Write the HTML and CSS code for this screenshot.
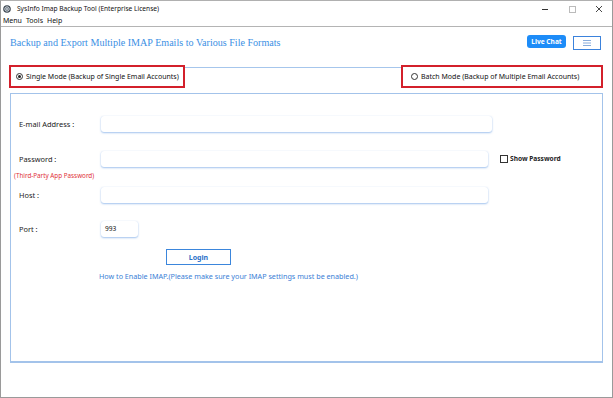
FILE: index.html
```html
<!DOCTYPE html>
<html>
<head>
<meta charset="utf-8">
<link rel="stylesheet" href="styles.css">
</head>
<body>
<div class="window">
  <div class="titlebar">
    <svg class="appicon" width="8" height="8" viewBox="0 0 8 8"><circle cx="4" cy="4" r="3.8" fill="#3c4650"/><circle cx="4" cy="4" r="2.2" fill="none" stroke="#dfe6ee" stroke-width="1"/><circle cx="4" cy="4" r="0.9" fill="#dfe6ee"/></svg>
    <span class="title">SysInfo Imap Backup Tool (Enterprise License)</span>
    <div class="controls">
      <svg width="8" height="8" viewBox="0 0 8 8"><line x1="1" y1="4.5" x2="7" y2="4.5" stroke="#333" stroke-width="1"/></svg>
      <svg width="8" height="8" viewBox="0 0 8 8"><rect x="1.5" y="1.5" width="6" height="6" fill="none" stroke="#bbb" stroke-width="1"/></svg>
      <svg width="8" height="8" viewBox="0 0 8 8"><path d="M1 1L7 7M7 1L1 7" stroke="#333" stroke-width="0.9"/></svg>
    </div>
  </div>
  <div class="menubar">
    <span>Menu</span><span>Tools</span><span>Help</span>
  </div>
  <div class="header">
    <h1 class="heading">Backup and Export Multiple IMAP Emails to Various File Formats</h1>
    <div class="header-actions">
      <button class="livechat">Live Chat</button>
      <button class="hamburger"><svg width="8" height="6" viewBox="0 0 8 6"><path d="M0 0.5H8M0 3H8M0 5.5H8" stroke="#7aa3d8" stroke-width="0.9"/></svg></button>
    </div>
  </div>
  <div class="modes">
    <label class="mode"><span class="radio checked"></span>Single Mode (Backup of Single Email Accounts)</label>
    <div class="mode-line"></div>
    <label class="mode batch"><span class="radio"></span>Batch Mode (Backup of Multiple Email Accounts)</label>
  </div>
  <div class="panel">
    <div class="row r1"><span class="label">E-mail Address :</span><div class="input w-email"></div></div>
    <div class="row r2"><span class="label">Password :</span><div class="input w-pass"></div>
      <label class="show"><span class="check"></span>Show Password</label></div>
    <div class="note">(Third-Party App Password)</div>
    <div class="row r3"><span class="label">Host :</span><div class="input w-host"></div></div>
    <div class="row r4"><span class="label">Port :</span><div class="input w-port">993</div></div>
    <div class="login-row"><button class="login">Login</button></div>
    <div class="link">How to Enable IMAP.(Please make sure your IMAP settings must be enabled.)</div>
  </div>
</div>
</body>
</html>
```
FILE: styles.css
```css
* { box-sizing: border-box; }
html, body { margin: 0; padding: 0; background: #fff; }
body { font-family: "Noto Sans", "Liberation Sans", sans-serif; color: #222; }
.window {
  width: 613px; height: 398px;
  border: 1px solid #9a9a9a;
  border-top-color: #b0b0b0;
  background: #fff;
  display: flex; flex-direction: column;
}
.titlebar {
  height: 14px; display: flex; align-items: center;
  padding-left: 2px; padding-top: 1px;
}
.appicon { margin-right: 6px; }
.title { font-size: 6.6px; color: #111; letter-spacing: 0; }
.controls { margin-left: auto; display: flex; gap: 19px; margin-right: 9px; }
.controls svg { display: block; }
.menubar {
  height: 12px; display: flex; align-items: center; gap: 4px;
  padding-left: 2px; font-size: 7px; color: #111;
  border-bottom: 1px solid #b4b4b4;
}
.header {
  display: flex; align-items: flex-start; justify-content: space-between;
  padding: 8px 11px 0 9px; height: 38px;
}
.heading {
  margin: 2px 0 0 0; font-family: "Liberation Serif", serif; font-weight: normal;
  font-size: 10.1px; color: #3b8fe4;
}
.header-actions { display: flex; gap: 7px; align-items: flex-start; }
.livechat {
  width: 39px; height: 13px; border: none; border-radius: 3px;
  background: #1d8cf8; color: #fff; font-family: "Noto Sans", sans-serif;
  font-weight: bold; font-size: 6.6px; padding: 0; margin-top: 0;
}
.hamburger {
  width: 28px; height: 14px; margin-top: 1px; background: #fff;
  border: 1.5px solid #3b82dc; padding: 0;
  display: flex; align-items: center; justify-content: center;
}
.modes {
  display: flex; align-items: flex-start; height: 23px;
  margin: 0 9px 0 9px;
}
.mode {
  height: 23px; border: 2px solid #d3202b;
  display: flex; align-items: center; font-size: 7px; color: #111;
  padding-left: 5px; white-space: nowrap;
}
.mode:first-child { width: 176px; margin-left: -1px; }
.mode.batch { width: 202px; padding-left: 8px; }
.mode-line { flex: 1; border-top: 1px solid #a6c6ec; margin-top: 2px; }
.radio {
  width: 7px; height: 7px; border-radius: 50%; border: 0.8px solid #333;
  margin-right: 3px; display: inline-flex; align-items: center; justify-content: center;
  background: #fff;
}
.radio.checked::after {
  content: ""; width: 3.5px; height: 3.5px; border-radius: 50%; background: #222;
}
.panel {
  margin: 5px 9px 0 9px; height: 270px;
  border: 1px solid #a3c3ea; border-bottom: 2px solid #a3c3ea;
  padding: 21px 0 0 0;
  display: flex; flex-direction: column;
}
.row { display: flex; align-items: center; height: 17px; position: relative; }
.label { width: 90px; padding-left: 8px; font-size: 7.4px; color: #222; }
.input {
  height: 16px; background: #fff; border-radius: 3px;
  box-shadow: 0 1px 2px rgba(90, 150, 225, 0.55), 0 0 1px rgba(90,150,225,0.25);
  font-size: 6.6px; display: flex; align-items: center; padding-left: 4px;
}
.w-email { width: 391px; }
.w-pass { width: 387px; }
.w-host { width: 387px; }
.w-port { width: 37px; color: #111; }
.r2 { margin-top: 18px; }
.show {
  display: flex; align-items: center; font-size: 6.6px; font-weight: bold;
  margin-left: 12px; color: #222;
}
.check { width: 8px; height: 8px; border: 0.8px solid #333; margin-right: 2px; background: #fff; }
.note { font-size: 6.3px; color: #e0303a; padding-left: 3px; margin-top: 4px; height: 10px; }
.r3 { margin-top: 5px; }
.r4 { margin-top: 17px; }
.login-row { display: flex; padding-left: 155px; margin-top: 12px; }
.login {
  width: 65px; height: 16px; background: #fff; border: 1.2px solid #3b86dc;
  color: #2a70c8; font-weight: bold; font-size: 7px; font-family: "Noto Sans", sans-serif; padding: 0;
}
.link { padding-left: 88px; margin-top: 6px; font-size: 7.2px; color: #3a80d6; }
```
